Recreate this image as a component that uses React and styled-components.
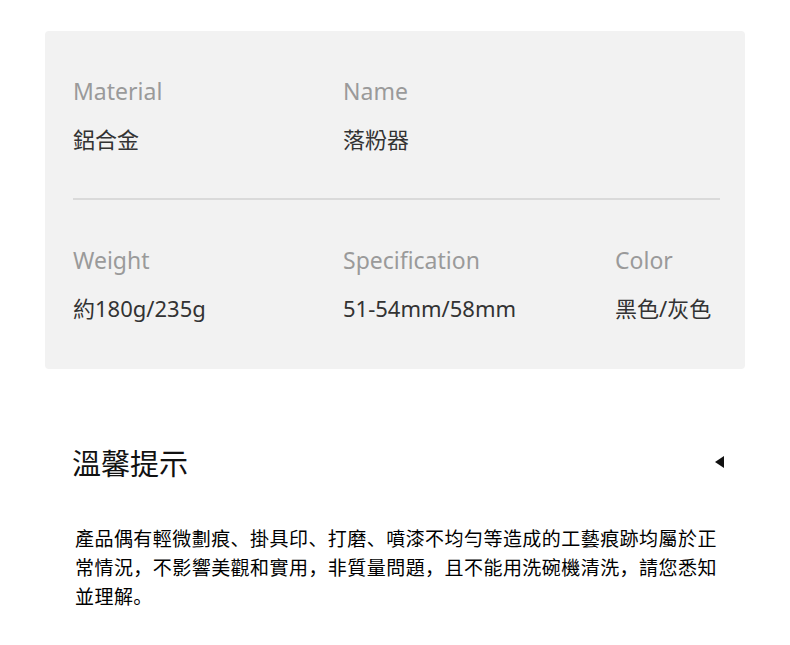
import React from "react"
import styled, { createGlobalStyle } from "styled-components"

const GlobalStyle = createGlobalStyle`
  html, body {
    margin: 0;
    padding: 0;
    background: #ffffff;
  }
  body {
    font-family: "Noto Sans", "Noto Sans CJK TC", sans-serif;
  }
`

const specs = [
  [
    { label: "Material", value: "鋁合金" },
    { label: "Name", value: "落粉器" },
  ],
  [
    { label: "Weight", value: "約180g/235g" },
    { label: "Specification", value: "51-54mm/58mm" },
    { label: "Color", value: "黑色/灰色" },
  ],
]

export default function App() {
  return (
    <>
      <GlobalStyle />
      <Page>
        <SpecCard>
          {specs.map((row, i) => (
            <React.Fragment key={i}>
              {i > 0 && <Divider />}
              <SpecRow $last={i === specs.length - 1}>
                {row.map((item) => (
                  <SpecItem key={item.label}>
                    <Label>{item.label}</Label>
                    <Value>{item.value}</Value>
                  </SpecItem>
                ))}
              </SpecRow>
            </React.Fragment>
          ))}
        </SpecCard>

        <Notice>
          <NoticeHead>
            <NoticeTitle>溫馨提示</NoticeTitle>
            <Caret />
          </NoticeHead>
          <NoticeText>
            產品偶有輕微劃痕、掛具印、打磨、噴漆不均勻等造成的工藝痕跡均屬於正常情況，不影響美觀和實用，非質量問題，且不能用洗碗機清洗，請您悉知並理解。
          </NoticeText>
        </Notice>
      </Page>
    </>
  )
}

const Page = styled.div`
  padding: 31px 45px 0;
  width: 700px;
`

const SpecCard = styled.section`
  background: #f2f2f2;
  border-radius: 4px;
  padding: 0 25px 0 28px;
`

const SpecRow = styled.div`
  display: grid;
  grid-template-columns: 270px 272px 1fr;
  padding: 44px 0 ${(p) => (p.$last ? "45px" : "43px")};
`

const SpecItem = styled.div`
  display: flex;
  flex-direction: column;
  gap: 16px;
`

const Label = styled.div`
  font-size: 23px;
  line-height: 32px;
  color: #9a9a9a;
`

const Value = styled.div`
  font-size: 22px;
  line-height: 32px;
  color: #333333;
`

const Divider = styled.div`
  height: 2px;
  background: #dadada;
`

const Notice = styled.section`
  padding: 75px 0 0;
`

const NoticeHead = styled.div`
  display: flex;
  align-items: center;
  justify-content: space-between;
  padding: 0 21px 0 27px;
  height: 36px;
`

const NoticeTitle = styled.h2`
  margin: 0;
  font-family: "Noto Sans CJK TC", sans-serif;
  font-weight: 400;
  font-size: 29px;
  line-height: 36px;
  color: #111111;
`

const Caret = styled.span`
  width: 0;
  height: 0;
  border-top: 6px solid transparent;
  border-bottom: 6px solid transparent;
  border-right: 9px solid #111111;
`

const NoticeText = styled.p`
  margin: 43px 0 0 30px;
  width: 650px;
  font-family: "Noto Sans CJK SC", "Noto Sans CJK TC", sans-serif;
  font-weight: 400;
  font-size: 19px;
  letter-spacing: 0.45px;
  line-height: 29px;
  color: #000000;
`
